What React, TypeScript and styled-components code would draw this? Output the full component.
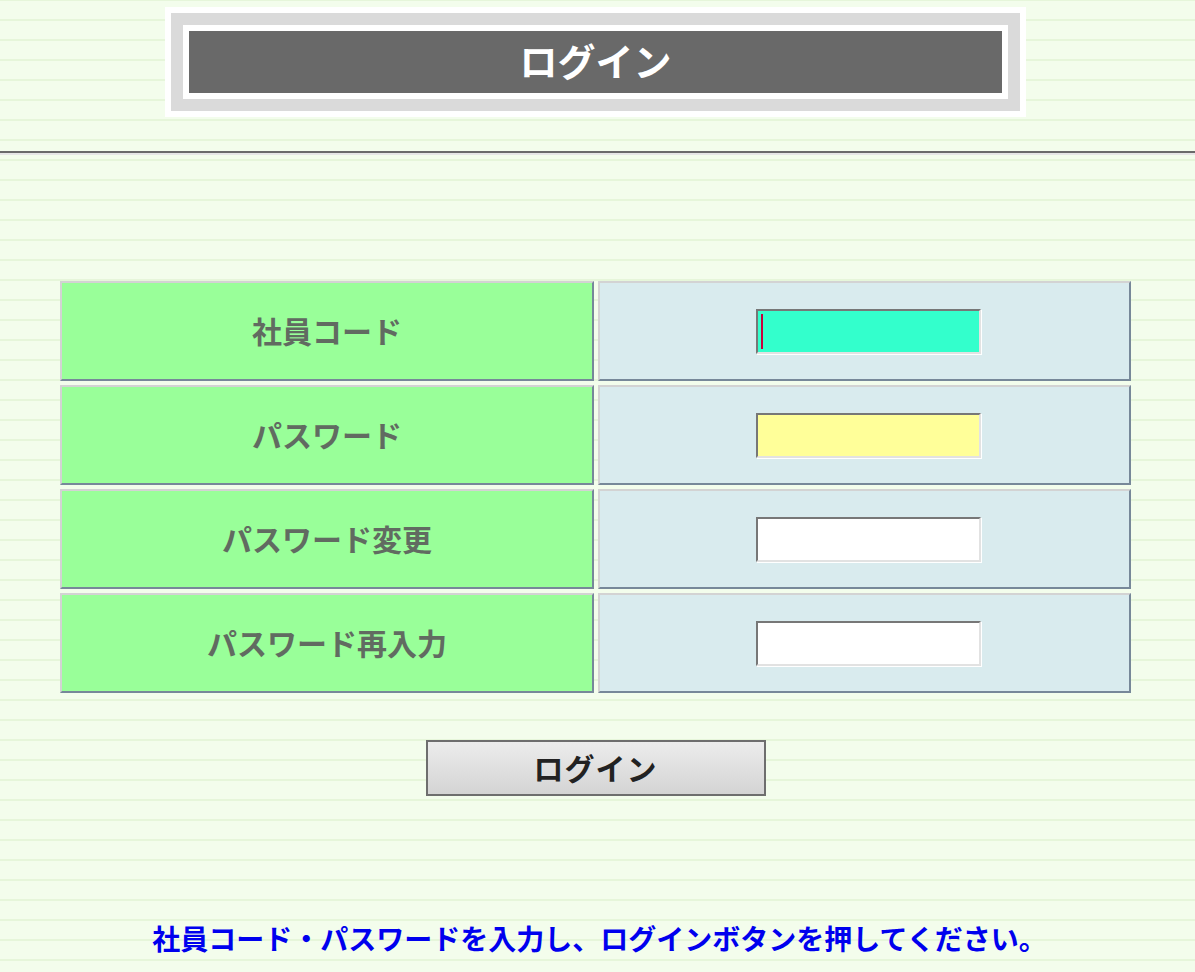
import { FC } from 'react';
import styled, { createGlobalStyle } from 'styled-components';

const FONT = `"Noto Sans CJK JP", "Noto Sans", sans-serif`;

const GlobalStyle = createGlobalStyle`
  html, body {
    margin: 0;
    padding: 0;
  }

  body {
    min-height: 972px;
    font-family: ${FONT};
    background-color: #f3fdec;
    background-image: linear-gradient(#e6f6da 0, #e6f6da 2px, transparent 2px);
    background-size: 20px 20px;
    background-position: 0 19px;
  }
`;

const fields = [
  { label: '社員コード', bg: '#33ffcc', caret: true },
  { label: 'パスワード', bg: '#ffff99' },
  { label: 'パスワード変更', bg: '#ffffff' },
  { label: 'パスワード再入力', bg: '#ffffff' },
];

const App: FC = () => (
  <>
    <GlobalStyle />
    <Page>
      <TitleFrame>
        <TitleRing>
          <TitleInner>
            <Title>ログイン</Title>
          </TitleInner>
        </TitleRing>
      </TitleFrame>

      <Rule />

      <FormTable>
        {fields.map((f) => (
          <Row key={f.label}>
            <LabelCell>{f.label}</LabelCell>
            <InputCell>
              <TextInput type="text" $bg={f.bg} $caret={!!f.caret} />
            </InputCell>
          </Row>
        ))}
      </FormTable>

      <LoginButton type="button">ログイン</LoginButton>

      <Notice>社員コード・パスワードを入力し、ログインボタンを押してください。</Notice>
    </Page>
  </>
);

export default App;

const Page = styled.div`
  display: flex;
  flex-direction: column;
  align-items: center;
  padding-top: 7px;
`;

const TitleFrame = styled.div`
  width: 861px;
  padding: 6px;
  background: #ffffff;
  box-sizing: border-box;
  transform: translateX(-2px);
`;

const TitleRing = styled.div`
  padding: 12px;
  background: #dadada;
`;

const TitleInner = styled.div`
  padding: 6px;
  background: #ffffff;
`;

const Title = styled.h1`
  margin: 0;
  height: 62px;
  display: flex;
  align-items: center;
  justify-content: center;
  background: #696969;
  color: #ffffff;
  font-size: 38px;
  font-weight: 700;
  line-height: 1;
  padding-bottom: 4px;
  box-sizing: border-box;
`;

const Rule = styled.div`
  align-self: stretch;
  margin-top: 34px;
  height: 2px;
  background: #6a6a6a;
  border-bottom: 2px solid #e6e6e6;
`;

const FormTable = styled.div`
  margin-top: 126px;
  width: 1071px;
  display: flex;
  flex-direction: column;
  gap: 4px;
  transform: translateX(-2px);
`;

const Row = styled.div`
  display: grid;
  grid-template-columns: 534px 533px;
  gap: 4px;
  height: 100px;
`;

const Cell = styled.div`
  display: flex;
  align-items: center;
  justify-content: center;
  box-sizing: border-box;
  border: 2px solid;
  border-color: #d3d3d3 #778899 #778899 #d3d3d3;
`;

const LabelCell = styled(Cell)`
  background: #99ff99;
  color: #616b61;
  font-size: 30px;
  font-weight: 700;
  padding-bottom: 3px;
`;

const InputCell = styled(Cell)`
  background: #d9ebee;
`;

const TextInput = styled.input<{ $bg: string; $caret: boolean }>`
  width: 225px;
  height: 45px;
  box-sizing: border-box;
  border: 2px solid;
  border-color: #777777 #e2e2e2 #e2e2e2 #777777;
  outline: none;
  box-shadow: 1px 1px 0 #ffffff;
  background: ${({ $bg, $caret }) =>
    $caret
      ? `linear-gradient(#c8003c, #c8003c) 3px 3px / 2px 35px no-repeat, ${$bg}`
      : $bg};
  font-family: ${FONT};
  transform: translateX(4px);
`;

const LoginButton = styled.button`
  margin-top: 47px;
  width: 340px;
  height: 56px;
  border: 2px solid #6e6e6e;
  background: linear-gradient(#ececec, #d4d4d4);
  color: #222222;
  font-family: ${FONT};
  font-size: 30px;
  font-weight: 700;
  letter-spacing: 1px;
  line-height: 1;
  padding-bottom: 3px;
  cursor: pointer;
  transform: translateX(-2px);
`;

const Notice = styled.p`
  margin: 122px 0 0;
  color: #0000ee;
  font-size: 28px;
  font-weight: 700;
  line-height: 40px;
  transform: translateX(2px);
`;
